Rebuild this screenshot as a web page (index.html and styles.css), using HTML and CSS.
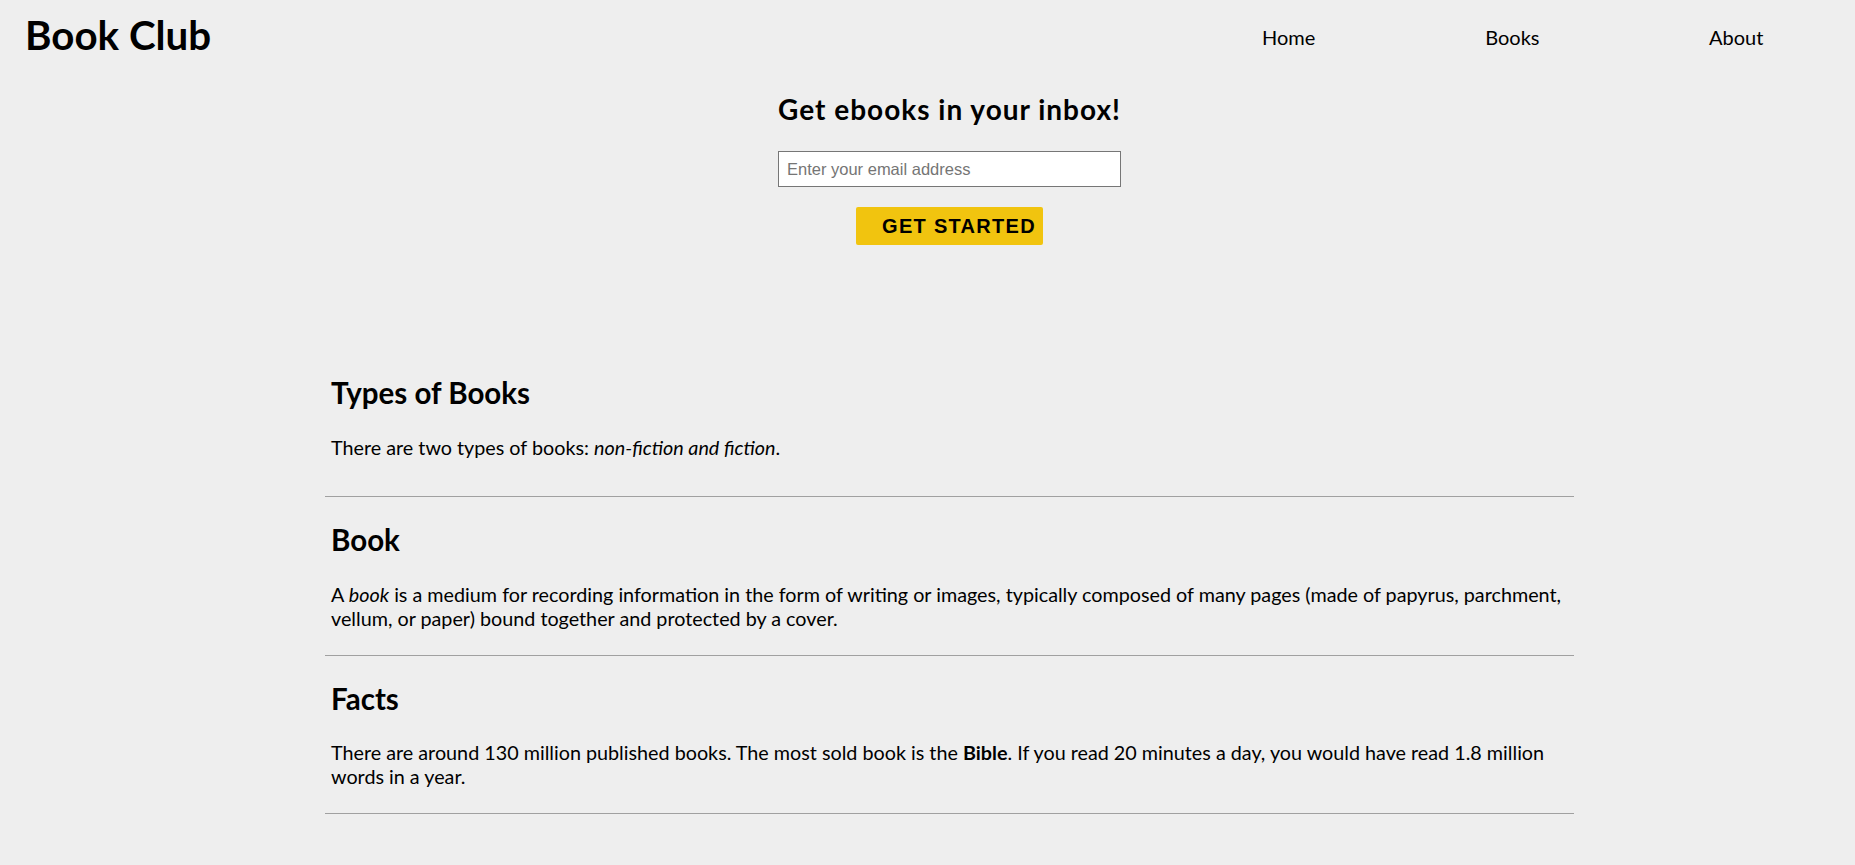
FILE: index.html
```html
<!DOCTYPE html>
<html lang="en">
<head>
<meta charset="utf-8">
<title>Book Club</title>
<link rel="stylesheet" href="styles.css">
</head>
<body>
<header class="site-header">
  <h1 class="logo">Book Club</h1>
  <nav>
    <ul class="nav-list">
      <li class="nav-item"><a href="#">Home</a></li>
      <li class="nav-item"><a href="#">Books</a></li>
      <li class="nav-item"><a href="#">About</a></li>
    </ul>
  </nav>
</header>
<main class="main">
  <section class="signup">
    <h2 class="signup-title">Get ebooks in your inbox!</h2>
    <input class="email" type="email" placeholder="Enter your email address">
    <button class="cta" type="button">GET STARTED</button>
  </section>
  <article class="card card-first">
    <h2 class="card-title">Types of Books</h2>
    <p class="card-text">There are two types of books: <em>non-fiction and fiction</em>.</p>
  </article>
  <article class="card">
    <h2 class="card-title">Book</h2>
    <p class="card-text">A <em>book</em> is a medium for recording information in the form of writing or images, typically composed of many pages (made of papyrus, parchment, vellum, or paper) bound together and protected by a cover.</p>
  </article>
  <article class="card">
    <h2 class="card-title">Facts</h2>
    <p class="card-text">There are around 130 million published books. The most sold book is the <strong>Bible</strong>. If you read 20 minutes a day, you would have read 1.8 million words in a year.</p>
  </article>
</main>
</body>
</html>
```

FILE: styles.css
```css
html, body {
  margin: 0;
  padding: 0;
}
body {
  background: #eeeeee;
  color: #000;
  font-family: Lato, "Open Sans", sans-serif;
}
.site-header {
  display: flex;
  justify-content: space-between;
  align-items: flex-start;
  padding: 11px 7px 0 25px;
}
.logo {
  margin: 0;
  font-size: 40.3px;
  font-weight: 700;
  line-height: 48px;
}
.nav-list {
  display: flex;
  list-style: none;
  margin: 13.5px 0 0;
  padding: 0;
}
.nav-item {
  width: 223.75px;
  text-align: center;
  font-size: 20px;
  line-height: 24px;
}
.nav-item a {
  color: #000;
  text-decoration: none;
}
.main {
  display: flex;
  flex-direction: column;
  align-items: center;
  padding-left: 44px;
}
.signup {
  display: flex;
  flex-direction: column;
  align-items: center;
  margin-top: 33px;
}
.signup-title {
  margin: 0;
  font-size: 28px;
  font-weight: 700;
  letter-spacing: 1px;
  line-height: 34px;
}
.email {
  box-sizing: border-box;
  width: 343px;
  height: 36px;
  margin-top: 25px;
  padding: 0 8px;
  border: 1px solid #767676;
  border-radius: 0;
  background: #fff;
  font-family: "Liberation Sans", Arial, sans-serif;
  font-size: 16.5px;
  color: #000;
}
.email::placeholder {
  color: #757575;
}
.cta {
  box-sizing: border-box;
  height: 38px;
  margin-top: 20px;
  padding: 0 7px 0 26px;
  border: none;
  border-radius: 2px;
  background: #f1c40f;
  color: #000;
  font-family: "Liberation Sans", Arial, sans-serif;
  font-size: 20px;
  font-weight: 700;
  letter-spacing: 1.3px;
}
.card {
  box-sizing: border-box;
  width: 1249px;
  padding: 25px 0 24px 6px;
  border-bottom: 1px solid #a0a0a0;
}
.card-first {
  margin-top: 130px;
  padding-top: 0;
  padding-bottom: 36.5px;
}
.card-title {
  margin: 0 0 24.5px;
  font-size: 29.5px;
  font-weight: 700;
  line-height: 36px;
}
.card-text {
  margin: 0;
  font-size: 19.75px;
  line-height: 24px;
}
```
